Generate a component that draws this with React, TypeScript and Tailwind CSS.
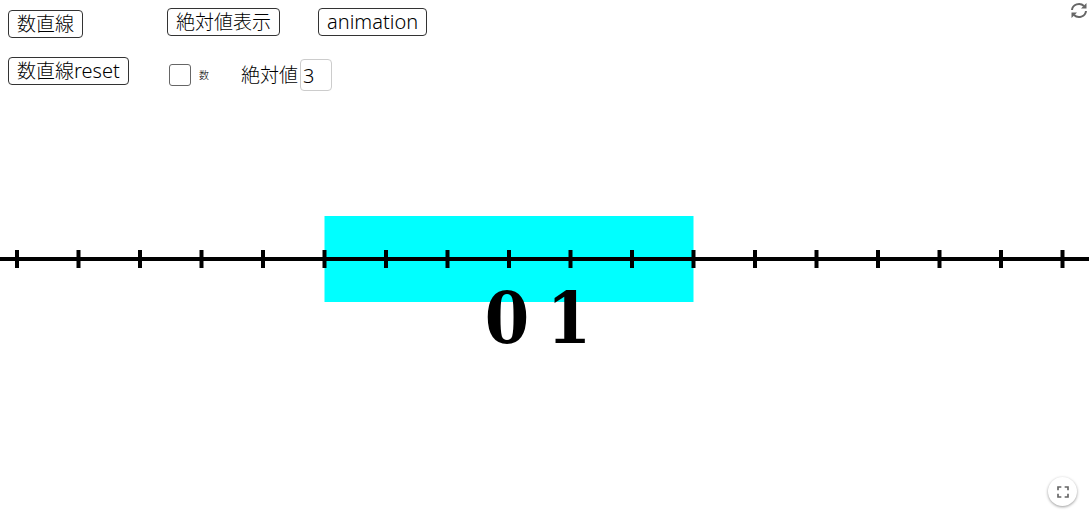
import { useState } from "react";
import type { ReactNode } from "react";
import { MdFullscreen } from "react-icons/md";

const ORIGIN = 509;
const UNIT = 61.5;
const TICKS = [-8, -7, -6, -5, -4, -3, -2, -1, 0, 1, 2, 3, 4, 5, 6, 7, 8, 9];

function ActionButton({ children, onClick }: { children: ReactNode; onClick?: () => void }) {
  return (
    <button
      type="button"
      onClick={onClick}
      className="h-7 justify-self-start rounded-[4px] border border-[#333] bg-white px-2 text-[19px] leading-6 whitespace-nowrap"
    >
      {children}
    </button>
  );
}

function NumberLine({ size }: { size: number }) {
  return (
    <svg viewBox="0 0 1089 160" className="block w-full" role="img" aria-label="数直線">
      <rect x={ORIGIN - size * UNIT} y="16" width={2 * size * UNIT} height="86" fill="#00ffff" />
      <line x1="0" x2="1089" y1="59" y2="59" stroke="#000" strokeWidth="4" />
      {TICKS.map((n) => (
        <line
          key={n}
          x1={ORIGIN + n * UNIT}
          x2={ORIGIN + n * UNIT}
          y1="50"
          y2="68"
          stroke="#000"
          strokeWidth="4"
        />
      ))}
      <g
        className="font-['DejaVu_Serif_Condensed','DejaVu_Serif',serif] text-[71px] font-bold"
        textAnchor="middle"
      >
        <text x="507" y="143">0</text>
        <text x="569" y="143">1</text>
      </g>
    </svg>
  );
}

export default function App() {
  const [value, setValue] = useState("3");
  const size = Math.min(Math.abs(Number(value)) || 0, 9);

  return (
    <div className="flex min-h-screen flex-col bg-white font-['Noto_Sans','Noto_Sans_CJK_JP',sans-serif] font-light text-black">
      <header className="flex items-start justify-between pt-2 pl-2">
        <div className="grid grid-cols-[159px_auto] gap-y-[19px]">
          <div className="pt-[2px]">
            <ActionButton>数直線</ActionButton>
          </div>
          <div className="flex items-start gap-[38px]">
            <ActionButton>絶対値表示</ActionButton>
            <ActionButton>
              <span className="text-xl leading-6">animation</span>
            </ActionButton>
          </div>
          <ActionButton onClick={() => setValue("3")}>
            数直線<span className="text-xl leading-6">reset</span>
          </ActionButton>
          <div className="flex items-center pt-[2px]">
            <label className="flex items-center gap-2 pl-[2px] text-[10px]">
              <input
                type="checkbox"
                className="size-[22px] appearance-none rounded-[3px] border border-[#666] bg-white checked:bg-[#666]"
              />
              数
            </label>
            <label className="ml-8 flex items-center gap-[2px] text-[19px]">
              絶対値
              <input
                type="text"
                value={value}
                onChange={(e) => setValue(e.target.value)}
                className="h-8 w-8 rounded-[4px] border border-[#ccc] bg-white px-[2px] text-xl"
              />
            </label>
          </div>
        </div>
        <button type="button" aria-label="リセット" className="-mt-2 p-px text-[#666]">
          <svg viewBox="0 0 18 18" className="size-[18px]" fill="none" stroke="currentColor" strokeWidth="2">
            <path d="M2 9A7 6.500 0 0 1 14 5M16 10A7 6.500 0 0 1 4 14" />
            <path d="M16.500 2v5.500H11zM1.500 17v-5.500H7z" fill="currentColor" stroke="none" />
          </svg>
        </button>
      </header>
      <main className="flex flex-1 flex-col justify-center pb-2">
        <NumberLine size={size} />
      </main>
      <footer className="flex justify-end px-3 pb-[11px]">
        <button
          type="button"
          aria-label="全画面表示"
          className="flex size-[29px] items-center justify-center rounded-full bg-white text-[#666] shadow-[0_1px_3px_rgba(0,0,0,0.4)]"
        >
          <MdFullscreen className="size-5" />
        </button>
      </footer>
    </div>
  );
}
